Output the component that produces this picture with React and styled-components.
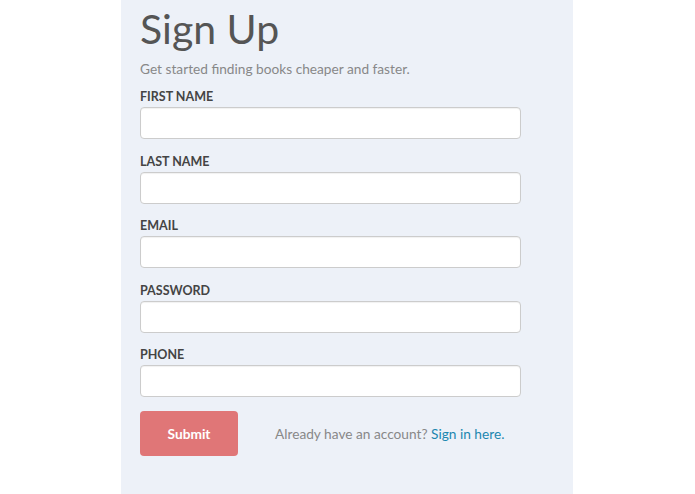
import React from "react";
import styled, { createGlobalStyle } from "styled-components";

const Global = createGlobalStyle`
  html, body { margin: 0; padding: 0; background: #ffffff; }
  body { font-family: Lato, "Open Sans", sans-serif; }
  * { box-sizing: border-box; }
`;

const Page = styled.div`
  display: flex;
  justify-content: flex-start;
  padding-left: 121px;
  min-height: 494px;
`;

const Panel = styled.div`
  width: 452px;
  min-height: 494px;
  background: #edf1f8;
  padding: 2px 19px 0 19px;
`;

const Title = styled.h1`
  margin: 0;
  font-family: Lato, sans-serif;
  font-weight: 400;
  font-size: 41px;
  line-height: 54px;
  color: #555555;
`;

const Subtitle = styled.p`
  margin: 2px 0 7px 0;
  font-size: 13.7px;
  line-height: 22px;
  color: #888888;
`;

const Form = styled.form`
  display: flex;
  flex-direction: column;
  gap: 12.5px;
`;

const Field = styled.div`
  display: flex;
  flex-direction: column;
`;

const Label = styled.label`
  font-size: 12.5px;
  font-weight: 700;
  line-height: 20px;
  color: #444444;
  text-transform: uppercase;
`;

const Input = styled.input`
  width: 381px;
  height: 32px;
  border: 1px solid #cccccc;
  border-radius: 4px;
  background: #ffffff;
  box-shadow: inset 0 1px 1px rgba(0, 0, 0, 0.06);
  font-family: Lato, sans-serif;
  font-size: 14px;
  padding: 0 10px;
  outline: none;
`;

const Actions = styled.div`
  display: flex;
  align-items: center;
  gap: 37px;
  margin-top: 1.5px;
`;

const Button = styled.button`
  width: 98px;
  height: 45px;
  border: none;
  border-radius: 4px;
  background: #e07677;
  color: #ffffff;
  font-family: Lato, sans-serif;
  font-size: 13.7px;
  font-weight: 700;
  cursor: pointer;
`;

const Note = styled.span`
  font-size: 13.7px;
  color: #888888;
`;

const Link = styled.a`
  color: #1c87b0;
  text-decoration: none;
`;

const fields = ["First Name", "Last Name", "Email", "Password", "Phone"];

export default function App() {
  return (
    <>
      <Global />
      <Page>
        <Panel>
          <Title>Sign Up</Title>
          <Subtitle>Get started finding books cheaper and faster.</Subtitle>
          <Form onSubmit={(e) => e.preventDefault()}>
            {fields.map((f) => (
              <Field key={f}>
                <Label>{f}</Label>
                <Input type={f === "Password" ? "password" : "text"} />
              </Field>
            ))}
            <Actions>
              <Button type="submit">Submit</Button>
              <Note>
                Already have an account? <Link href="#">Sign in here.</Link>
              </Note>
            </Actions>
          </Form>
        </Panel>
      </Page>
    </>
  );
}
